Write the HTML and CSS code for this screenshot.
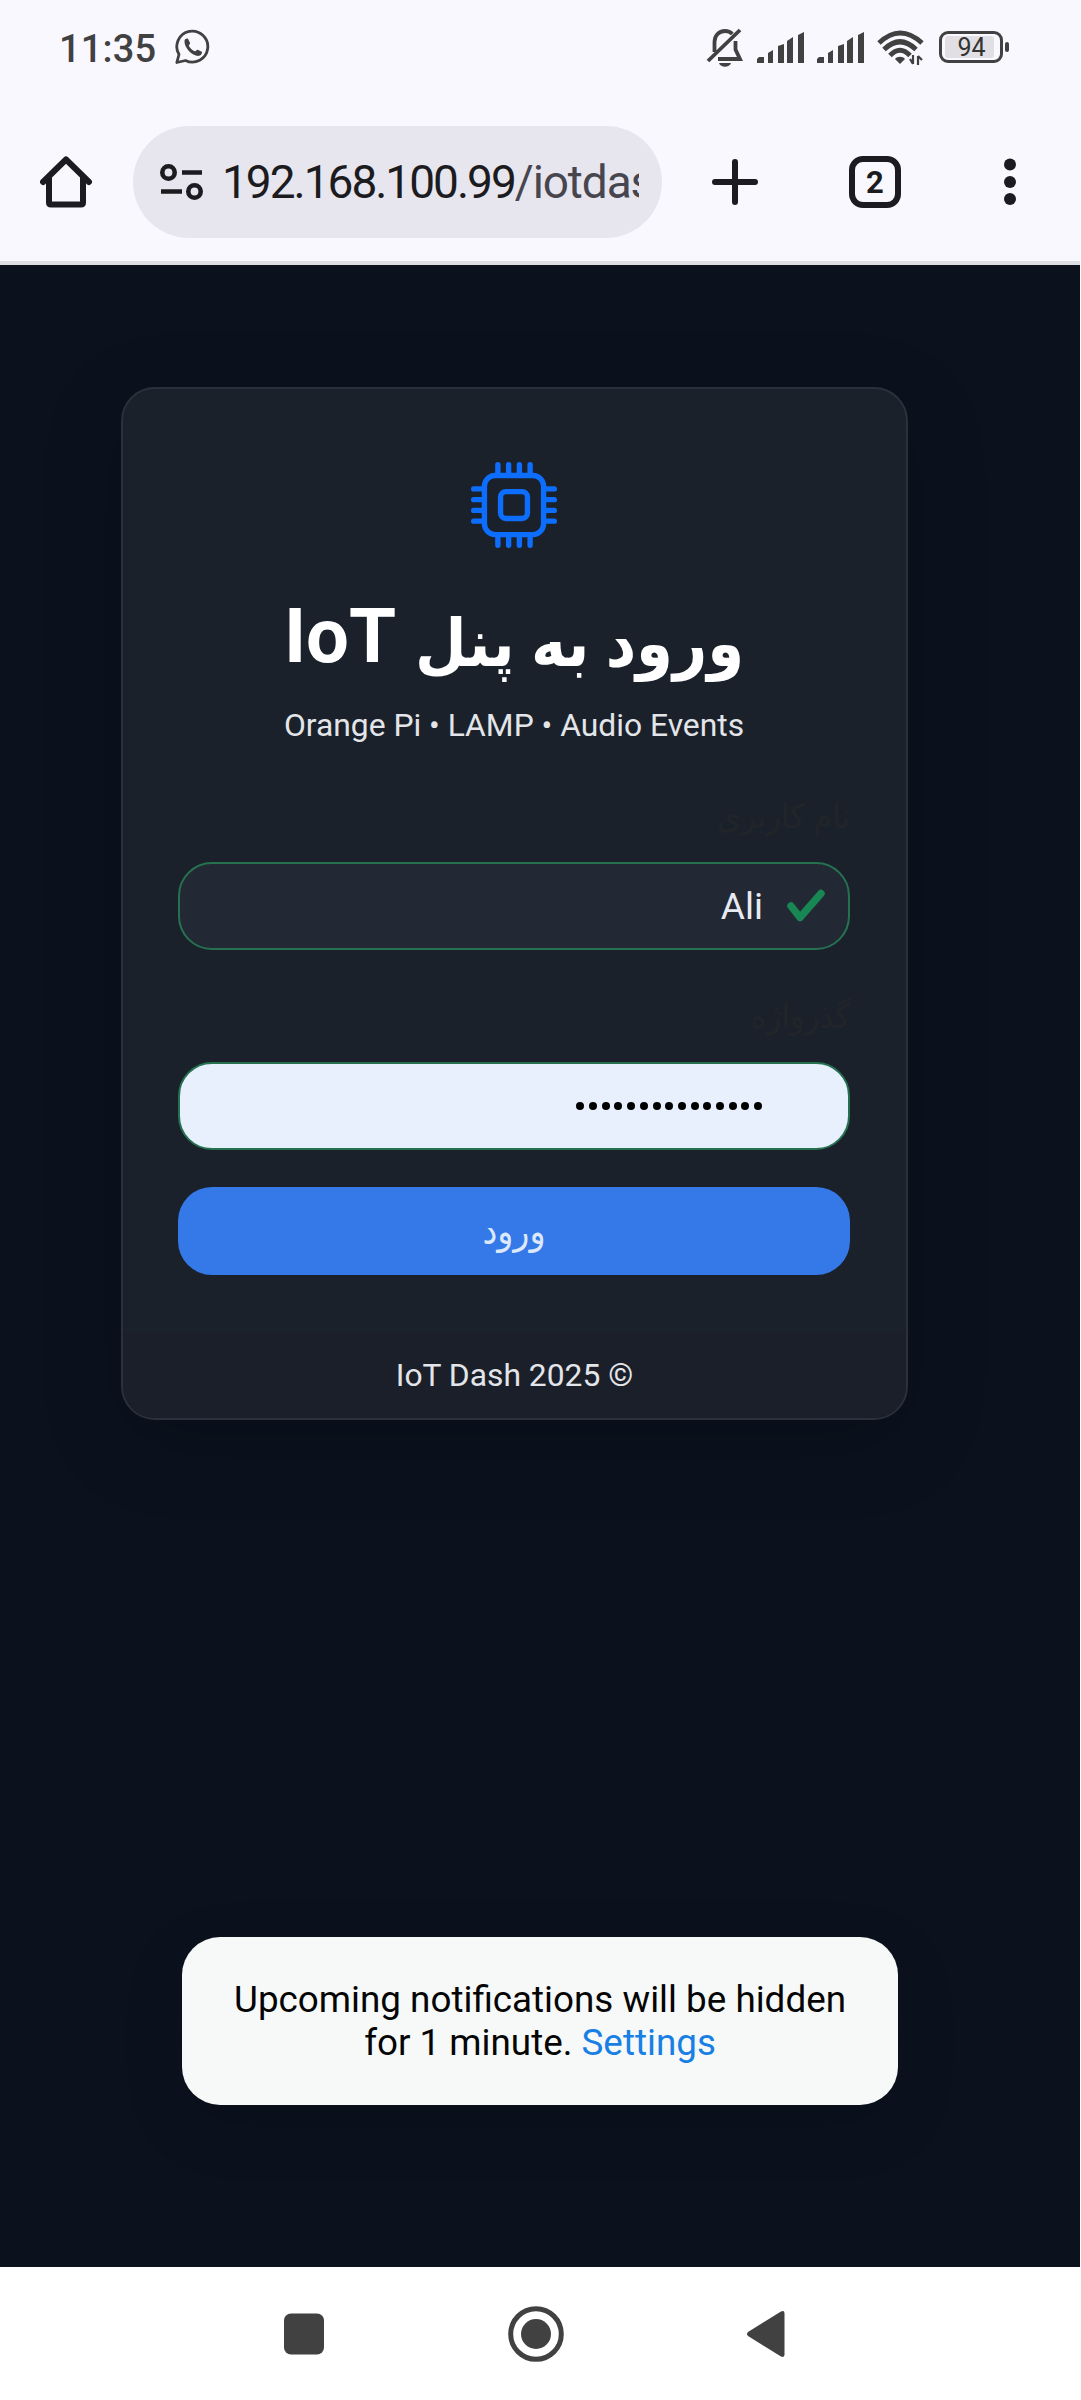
FILE: index.html
```html
<!DOCTYPE html>
<html lang="fa">
<head>
<meta charset="utf-8">
<title>IoT Dash</title>
<link rel="stylesheet" href="styles.css">
</head>
<body>
<div class="phone">
  <header class="status">
    <span class="time">11:35</span>
    <svg class="whatsapp" width="36" height="36" viewBox="0 0 36 36" fill="none" stroke="#414141" stroke-width="2.8"><path d="M1.800 33.500 4 25.500A15.500 15.500 0 1 1 10.500 31.500Z" stroke-linejoin="round"/><path d="M9.500 11.500c.5-2 2.600-2.500 3.600-1.600l2 4c.3 1-1.600 2.200-1.200 3 1.500 2.600 3.500 4.200 6 5.400.8.300 1.900-2 2.900-1.600l4 2c.8 1.200-.6 3.700-2.700 4.100-5.800 1-15.300-7.500-14.600-15.300z" fill="#414141" stroke="none"/></svg>
    <div class="status-icons">
      <svg class="bell" width="38" height="40" viewBox="0 0 38 40" fill="none" stroke="#414141" stroke-width="3.800"><path d="M8.500 24V14c0-6 4-11 10.500-11 3 0 5.500 1 7.300 3M29.500 13v8.500l4.500 9.500H12M34 2 2 33"/><path d="M13 35h12c-1.500 5-10.500 5-12 0z" fill="#414141" stroke="none"/></svg>
      <svg class="signal" width="48" height="32" viewBox="0 0 48 32" fill="#414141"><path d="M0 31v-4l2-2h5v6zM11 31V21l5-3v13zM21 31V14l6-2v19zM30 31V9l6-4v26zM41 31V3l6-3v31z"/></svg>
      <svg class="signal" width="48" height="32" viewBox="0 0 48 32" fill="#414141"><path d="M0 31v-4l2-2h5v6zM11 31V21l5-3v13zM21 31V14l6-2v19zM30 31V9l6-4v26zM41 31V3l6-3v31z"/></svg>
      <svg class="wifi" width="48" height="36" viewBox="0 0 48 36" fill="none" stroke="#414141" stroke-width="5"><path d="M2 13Q23-7 45 13M7 19.500Q23 4 39 19.500M13 25.500Q23 15 33 25.500"/><path d="m23 34-5-5c2-3 8-3 10 0z" fill="#414141" stroke="none"/><path d="M36 25v9m0 0-3-5M41 35v-9m0 0 4 4" stroke-width="2.200"/></svg>
      <div class="battery"><span>94</span></div>
    </div>
  </header>
  <nav class="toolbar">
    <svg class="home" width="52" height="52" viewBox="0 0 52 52" fill="none" stroke="#1b1b20" stroke-width="6" stroke-linejoin="round" stroke-linecap="round"><path d="M3 26 26 3.500 49 26M9 22v24.500q0 2 2 2h30q2 0 2-2V22"/></svg>
    <div class="address">
      <svg width="44" height="38" viewBox="0 0 44 38" fill="none" stroke="#1b1b20" stroke-width="4.600"><circle cx="8.500" cy="9.500" r="6.200"/><circle cx="34.500" cy="28.500" r="6.200"/><path d="M22 9.500h20M1 28.500h21"/></svg>
      <div class="url"><b>192.168.100.99</b>/iotdas</div>
    </div>
    <svg class="plus" width="46" height="48" viewBox="0 0 46 48" stroke="#1b1b20" stroke-width="6" stroke-linecap="round"><path d="M3 24h40M23 4v40"/></svg>
    <span class="tabs">2</span>
    <svg class="more" width="14" height="48" viewBox="0 0 14 48" fill="#1b1b20"><circle cx="7" cy="6.500" r="6"/><circle cx="7" cy="24" r="6"/><circle cx="7" cy="41" r="6"/></svg>
  </nav>
  <main class="page">
    <section class="card">
      <div class="card-body">
        <svg class="cpu" width="86" height="86" viewBox="0 0 16 16" fill="#0d6efd"><path d="M5 0a.5.5 0 0 1 .5.5V2h1V.5a.5.5 0 0 1 1 0V2h1V.5a.5.5 0 0 1 1 0V2h1V.5a.5.5 0 0 1 1 0V2A2.500 2.500 0 0 1 14 4.500h1.500a.5.5 0 0 1 0 1H14v1h1.500a.5.5 0 0 1 0 1H14v1h1.500a.5.5 0 0 1 0 1H14v1h1.500a.5.5 0 0 1 0 1H14a2.500 2.500 0 0 1-2.500 2.500v1.500a.5.5 0 0 1-1 0V14h-1v1.500a.5.5 0 0 1-1 0V14h-1v1.500a.5.5 0 0 1-1 0V14h-1v1.500a.5.5 0 0 1-1 0V14A2.500 2.500 0 0 1 2 11.500H.5a.5.5 0 0 1 0-1H2v-1H.5a.5.5 0 0 1 0-1H2v-1H.5a.5.5 0 0 1 0-1H2v-1H.5a.5.5 0 0 1 0-1H2A2.500 2.500 0 0 1 4.500 2V.5A.5.5 0 0 1 5 0m-.5 3A1.500 1.500 0 0 0 3 4.500v7A1.500 1.500 0 0 0 4.500 13h7a1.500 1.500 0 0 0 1.500-1.500v-7A1.500 1.500 0 0 0 11.500 3zM5 6.500A1.500 1.500 0 0 1 6.500 5h3A1.500 1.500 0 0 1 11 6.500v3A1.500 1.500 0 0 1 9.500 11h-3A1.500 1.500 0 0 1 5 9.500zM6.500 6a.5.5 0 0 0-.5.5v3a.5.5 0 0 0 .5.5h3a.5.5 0 0 0 .5-.5v-3a.5.5 0 0 0-.5-.5z"/></svg>
        <h1 dir="rtl"><span class="fa">ورود به پنل</span> <span>IoT</span></h1>
        <p class="sub">Orange Pi • LAMP • Audio Events</p>
        <div class="label" dir="rtl">نام کاربری</div>
        <div class="input"><span>Ali</span><svg width="38" height="34" viewBox="0 0 38 34" fill="none" stroke="#198754" stroke-width="7.400" stroke-linecap="round" stroke-linejoin="round"><path d="m4 17 9 11.500L34 4.500"/></svg></div>
        <div class="label second" dir="rtl">گذرواژه</div>
        <div class="input filled"><i></i><i></i><i></i><i></i><i></i><i></i><i></i><i></i><i></i><i></i><i></i><i></i><i></i><i></i><i></i></div>
        <div class="submit" dir="rtl">ورود</div>
      </div>
      <footer class="card-footer">IoT Dash 2025 ©</footer>
    </section>
    <aside class="toast">Upcoming notifications will be hidden<br>for 1 minute. <span>Settings</span></aside>
  </main>
  <nav class="system">
    <svg width="40" height="42" viewBox="0 0 40 42" fill="#414141"><rect width="40" height="41" y=".5" rx="7"/></svg>
    <svg width="56" height="56" viewBox="0 0 56 56" fill="none" stroke="#414141" stroke-width="5"><circle cx="28" cy="28" r="25.300"/><circle cx="28" cy="28" r="15" fill="#414141" stroke="none"/></svg>
    <svg width="38" height="48" viewBox="0 0 38 48" fill="#414141"><path d="M1 22 34 1.500q3.500-1.500 3.500 2v41q0 3.500-3.500 2L1 26q-2-2 0-4z"/></svg>
  </nav>
</div>
</body>
</html>
```
FILE: styles.css
```css
* { box-sizing: border-box; }
body { margin: 0; background: #fff; font-family: Roboto, "DejaVu Sans Condensed", "DejaVu Sans", sans-serif; }
svg { display: block; flex: none; }
.phone { width: 1080px; height: 2400px; display: flex; flex-direction: column; }

.status { height: 96px; background: #f9f8ff; display: flex; align-items: flex-start; padding: 0 71px 0 59px; }
.time { margin-top: 26px; width: 116px; font-size: 38px; line-height: 46px; font-weight: 500; color: #414141; letter-spacing: .2px; white-space: nowrap; }
.whatsapp { margin-top: 29px; }
.status-icons { margin-left: auto; display: flex; align-items: flex-start; }
.bell { margin: 28px 13px 0 0; }
.signal { margin: 32px 12px 0 0; }
.wifi { margin: 30px 14px 0 0; }
.battery { width: 64px; height: 32px; margin: 31px 6px 0 0; border: 3px solid #414141; border-radius: 9px; padding: 2px 6px 2px 3px; position: relative; }
.battery span { display: block; height: 22px; line-height: 23px; background: #e1dfe4; border-radius: 3px; text-align: center; font-size: 25px; color: #333; padding-left: 4px; }
.battery::after { content: ""; position: absolute; right: -9px; top: 8px; width: 4px; height: 10px; border-radius: 2px; background: #414141; }

.toolbar { height: 169px; background: #f9f8ff; border-bottom: 4px solid #dddfe4; padding: 30px 62px 0 40px; display: flex; align-items: flex-start; }
.home { margin-top: 30px; }
.address { width: 529px; height: 112px; margin-left: 41px; border-radius: 56px; background: #e7e5ee; display: flex; align-items: center; padding-left: 27px; }
.url { margin-left: 18px; width: 417px; overflow: hidden; white-space: nowrap; font-size: 46px; line-height: 60px; color: #47464f; letter-spacing: -1.100px; }
.url b { font-weight: 400; color: #1b1b20; letter-spacing: -2px; }
.plus { margin: 32px 0 0 50px; }
.tabs { width: 52px; height: 52px; margin: 30px 0 0 91px; border: 6px solid #1b1b20; border-radius: 14px; font-size: 31px; line-height: 41px; font-weight: 700; text-align: center; color: #1b1b20; }
.more { margin: 32px 0 0 102px; }

.page { height: 2002px; background: #0b121e; padding-top: 122px; display: flex; flex-direction: column; align-items: center; }
.card { width: 787px; height: 1033px; margin-right: 51px; border: 2px solid #2b313c; border-radius: 34px; background: #1a212b; box-shadow: 0 22px 82px rgba(0,0,0,.2); overflow: hidden; display: flex; flex-direction: column; }
.card-body { height: 942px; padding: 73px 56px 0 55px; display: flex; flex-direction: column; }
.cpu { align-self: center; }
h1 { margin: 38px 0 0; height: 100px; line-height: 100px; font-size: 76px; font-weight: 700; color: #fff; text-align: center; white-space: nowrap; }
.fa { font-size: 66px; line-height: 1; vertical-align: -4px; }
.sub { margin: 18px 0 0; height: 42px; line-height: 42px; font-size: 31.800px; color: #e3e5e9; text-align: center; }
.label { margin-top: 42px; height: 56px; line-height: 56px; font-size: 34px; color: #212529; }
.input { height: 88px; margin-top: 18px; border: 2px solid #267250; border-radius: 34px; background: #222834; display: flex; align-items: center; justify-content: flex-end; padding-right: 23px; font-size: 37px; color: #e8eaf2; }
.input svg { margin-left: 24px; }
.label.second { margin-top: 38px; }
.input.filled { background: #e8f0fe; padding-right: 86px; gap: 4.700px; }
.input i { width: 8px; height: 8px; border-radius: 50%; background: #000; }
.submit { height: 88px; margin-top: 37px; border-radius: 34px; background: #3579e9; font-size: 37px; line-height: 90px; text-align: center; color: #dce8fb; }
.card-footer { flex: 1; border-top: 1px solid #1d232e; background: #1a1f2a; font-size: 31.800px; line-height: 86px; text-align: center; color: #e3e5e9; }
.toast { width: 716px; height: 168px; margin-top: 517px; border-radius: 38px; background: #f7f9f8; box-shadow: 0 20px 60px rgba(0,0,0,.15); padding-top: 41px; font-size: 36.800px; line-height: 43px; text-align: center; color: #050505; white-space: nowrap; }
.toast span { color: #187fe4; }

.system { height: 133px; background: #fff; display: flex; align-items: center; padding-left: 284px; }
.system svg:nth-child(2) { margin-left: 184px; }
.system svg:nth-child(3) { margin-left: 183px; }
```
